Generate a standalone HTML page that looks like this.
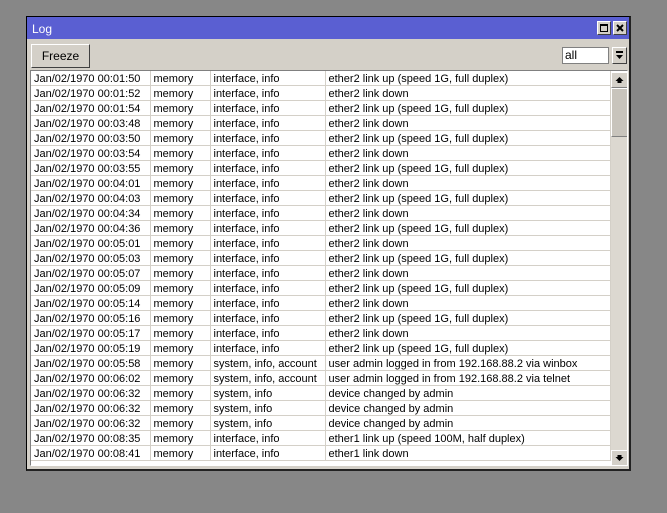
<!DOCTYPE html>
<html><head><style>
body{margin:0;width:667px;height:513px;background:#878787;position:relative;overflow:hidden;font-family:"Liberation Sans",sans-serif;font-size:11px;color:#000}
.win{position:absolute;left:26px;top:16px;width:605px;height:455px;background:#d4d0c8;border:1px solid #000;box-sizing:border-box;border-right:2px solid #222;border-bottom:2px solid #222}
.title{position:absolute;left:0;top:0;right:0;height:22px;background:#5a5fd2;color:#fff;font-size:12px;line-height:24px;padding-left:5px}
.tb{position:absolute;top:4px;width:14px;height:14px;background:#d4d0c8;border:1px solid;border-color:#fff #404040 #404040 #fff;box-sizing:border-box}
.btn{position:absolute;left:4px;top:27px;width:59px;height:24px;background:#d4d0c8;border:1px solid;border-color:#fff #404040 #404040 #fff;box-sizing:border-box;text-align:center;line-height:22px;font-size:12px}
.sel{position:absolute;left:535px;top:30px;width:47px;height:17px;background:#fff;border:1px solid #808080;box-sizing:border-box;font-size:12px;line-height:15px;padding-left:2px}
.dd{position:absolute;left:585px;top:30px;width:15px;height:17px;border:1px solid;border-color:#fff #404040 #404040 #fff;box-sizing:border-box}
.list{position:absolute;left:3px;top:53px;width:598px;height:396px;background:#fff;border:1px solid;border-color:#808080 #fff #fff #808080;box-sizing:border-box;overflow:hidden}
table{border-collapse:collapse;position:absolute;left:0;top:0;table-layout:fixed}
td{height:12px;border-right:1px solid #d4d0c8;border-bottom:1px solid #d4d0c8;padding:2px 0 0 3px;white-space:nowrap;overflow:hidden;line-height:12px;vertical-align:top}
.sb{position:absolute;left:580px;top:1px;width:17px;height:394px;background:#dcd8d0}
.sbb{position:absolute;left:0;width:17px;height:16px;background:#d4d0c8;border:1px solid;border-color:#fff #808080 #808080 #fff;box-sizing:border-box}
</style></head><body>
<div class="win">
<div class="title">Log
<div class="tb" style="left:570px"><div style="position:absolute;left:2px;top:2px;width:6px;height:5px;border:1px solid #000;border-top-width:2px"></div></div>
<div class="tb" style="left:586px"><svg width="12" height="12" style="position:absolute;left:0;top:0"><path d="M3 3l6 6M9 3l-6 6" stroke="#000" stroke-width="2"/></svg></div>
</div>
<div class="btn">Freeze</div>
<div class="sel">all</div>
<div class="dd"><svg width="13" height="15" style="position:absolute;left:0;top:0"><rect x="3" y="3" width="7" height="2" fill="#000"/><path d="M3 7h7l-3.5 4z" fill="#000"/></svg></div>
<div class="list">
<table>
<colgroup><col style="width:119px"><col style="width:60px"><col style="width:115px"><col style="width:285px"></colgroup>
<tbody>
<tr><td>Jan/02/1970 00:01:50</td><td>memory</td><td>interface, info</td><td>ether2 link up (speed 1G, full duplex)</td></tr>
<tr><td>Jan/02/1970 00:01:52</td><td>memory</td><td>interface, info</td><td>ether2 link down</td></tr>
<tr><td>Jan/02/1970 00:01:54</td><td>memory</td><td>interface, info</td><td>ether2 link up (speed 1G, full duplex)</td></tr>
<tr><td>Jan/02/1970 00:03:48</td><td>memory</td><td>interface, info</td><td>ether2 link down</td></tr>
<tr><td>Jan/02/1970 00:03:50</td><td>memory</td><td>interface, info</td><td>ether2 link up (speed 1G, full duplex)</td></tr>
<tr><td>Jan/02/1970 00:03:54</td><td>memory</td><td>interface, info</td><td>ether2 link down</td></tr>
<tr><td>Jan/02/1970 00:03:55</td><td>memory</td><td>interface, info</td><td>ether2 link up (speed 1G, full duplex)</td></tr>
<tr><td>Jan/02/1970 00:04:01</td><td>memory</td><td>interface, info</td><td>ether2 link down</td></tr>
<tr><td>Jan/02/1970 00:04:03</td><td>memory</td><td>interface, info</td><td>ether2 link up (speed 1G, full duplex)</td></tr>
<tr><td>Jan/02/1970 00:04:34</td><td>memory</td><td>interface, info</td><td>ether2 link down</td></tr>
<tr><td>Jan/02/1970 00:04:36</td><td>memory</td><td>interface, info</td><td>ether2 link up (speed 1G, full duplex)</td></tr>
<tr><td>Jan/02/1970 00:05:01</td><td>memory</td><td>interface, info</td><td>ether2 link down</td></tr>
<tr><td>Jan/02/1970 00:05:03</td><td>memory</td><td>interface, info</td><td>ether2 link up (speed 1G, full duplex)</td></tr>
<tr><td>Jan/02/1970 00:05:07</td><td>memory</td><td>interface, info</td><td>ether2 link down</td></tr>
<tr><td>Jan/02/1970 00:05:09</td><td>memory</td><td>interface, info</td><td>ether2 link up (speed 1G, full duplex)</td></tr>
<tr><td>Jan/02/1970 00:05:14</td><td>memory</td><td>interface, info</td><td>ether2 link down</td></tr>
<tr><td>Jan/02/1970 00:05:16</td><td>memory</td><td>interface, info</td><td>ether2 link up (speed 1G, full duplex)</td></tr>
<tr><td>Jan/02/1970 00:05:17</td><td>memory</td><td>interface, info</td><td>ether2 link down</td></tr>
<tr><td>Jan/02/1970 00:05:19</td><td>memory</td><td>interface, info</td><td>ether2 link up (speed 1G, full duplex)</td></tr>
<tr><td>Jan/02/1970 00:05:58</td><td>memory</td><td>system, info, account</td><td>user admin logged in from 192.168.88.2 via winbox</td></tr>
<tr><td>Jan/02/1970 00:06:02</td><td>memory</td><td>system, info, account</td><td>user admin logged in from 192.168.88.2 via telnet</td></tr>
<tr><td>Jan/02/1970 00:06:32</td><td>memory</td><td>system, info</td><td>device changed by admin</td></tr>
<tr><td>Jan/02/1970 00:06:32</td><td>memory</td><td>system, info</td><td>device changed by admin</td></tr>
<tr><td>Jan/02/1970 00:06:32</td><td>memory</td><td>system, info</td><td>device changed by admin</td></tr>
<tr><td>Jan/02/1970 00:08:35</td><td>memory</td><td>interface, info</td><td>ether1 link up (speed 100M, half duplex)</td></tr>
<tr><td>Jan/02/1970 00:08:41</td><td>memory</td><td>interface, info</td><td>ether1 link down</td></tr>
</tbody></table>
<div class="sb">
<div class="sbb" style="top:0"><svg width="15" height="14"><path d="M7.5 4l4 4h-2v2h-4v-2h-2z" fill="#000"/></svg></div>
<div class="sbb" style="top:16px;height:49px;background:#c8c4bc"></div>
<div class="sbb" style="top:378px"><svg width="15" height="14"><path d="M7.5 10l4-4h-2v-2h-4v2h-2z" fill="#000"/></svg></div>
</div>
</div>
</div>
</body></html>
